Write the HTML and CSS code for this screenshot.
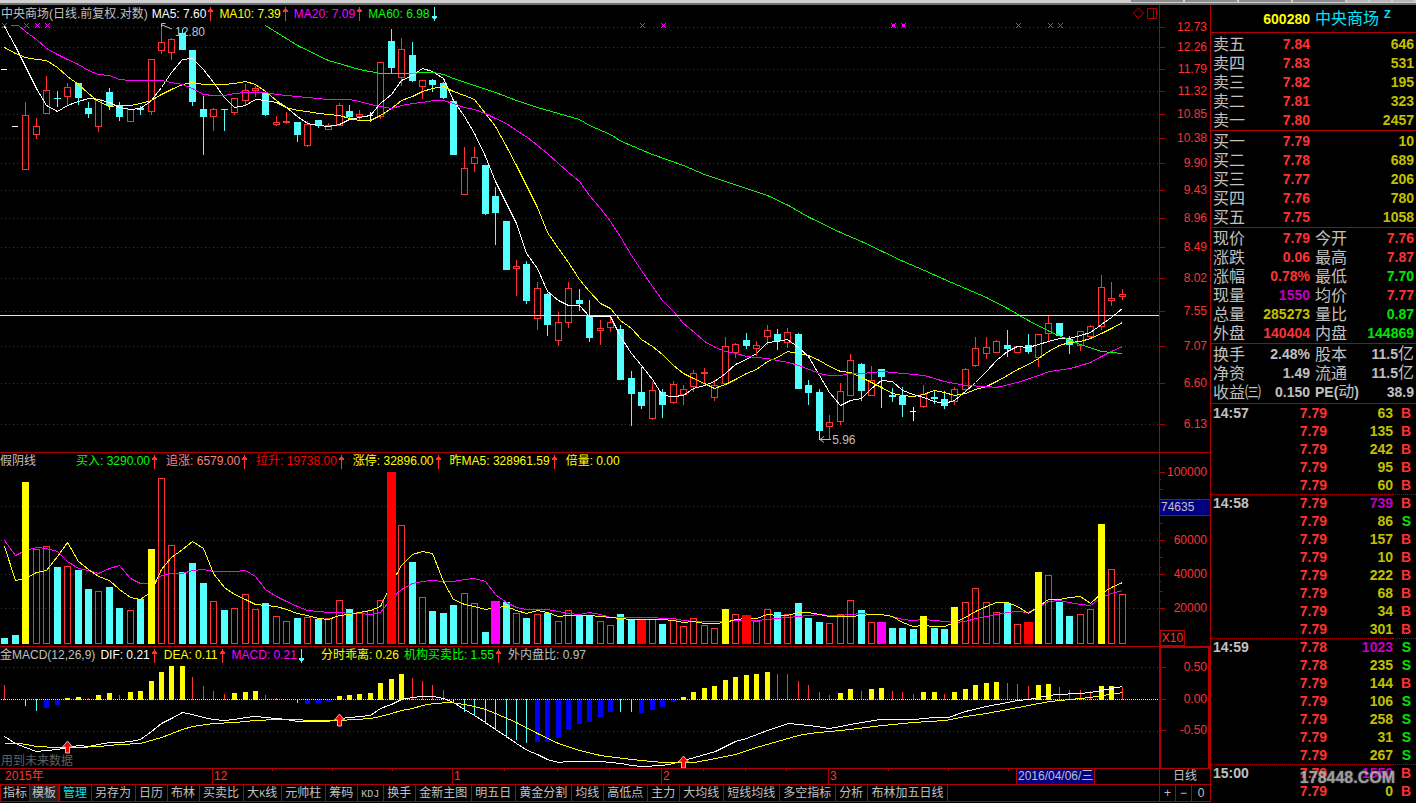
FILE: index.html
```html
<!DOCTYPE html>
<html lang="zh-CN">
<head>
<meta charset="utf-8">
<title>中央商场 600280</title>
<link rel="stylesheet" href="styles.css">
</head>
<body>
<svg class="defs" aria-hidden="true">
  <symbol id="up" viewBox="0 0 8 14"><path d="M3 0h1v2h1v1h1v2H4v9H3V5H1V3h1V2h1z" fill="#ff3232"/></symbol>
  <symbol id="down" viewBox="0 0 8 14"><path d="M3 14h1v-2h1v-1h1V9H4V0H3v9H1v2h1v1h1z" fill="#54ffff"/></symbol>
</svg>
<div class="app">
  <div class="strip"><i></i><i></i><i></i><i></i><i class="light"></i><i class="light"></i><i class="light"></i></div>
  <div class="body">
    <main class="charts">
      <section class="panel">
        <div class="pane">
          <header class="legend">
            <span class="grey">中央商场(日线.前复权.对数)</span>
            <span class="white">MA5: 7.60<svg class="arrow"><use href="#up"/></svg></span>
            <span class="yellow">MA10: 7.39<svg class="arrow"><use href="#up"/></svg></span>
            <span class="magenta">MA20: 7.09<svg class="arrow"><use href="#up"/></svg></span>
            <span class="green">MA60: 6.98<svg class="arrow"><use href="#down"/></svg></span>
            <svg class="tools" viewBox="0 0 26 14"><path d="M6.500 2l5 5-5 5.500L1.500 7z" fill="none" stroke="#c00000"/><path d="M15.500 2.500h9v10h-9zM21.500 2.500v10" fill="none" stroke="#b00000"/></svg>
          </header>
          <div class="plot">
            <svg id="price" viewBox="0 23 1159 429" preserveAspectRatio="none"></svg>
            <span class="note high">12.80</span>
            <span class="note low">5.96</span>
          </div>
        </div>
        <div class="axis" id="price-axis"></div>
      </section>

      <section class="panel">
        <div class="pane">
          <header class="legend wide">
            <span class="grey first">假阴线</span>
            <span class="green">买入: 3290.00<svg class="arrow"><use href="#up"/></svg></span>
            <span class="pink">追涨: 6579.00<svg class="arrow"><use href="#up"/></svg></span>
            <span class="red">拉升: 19738.00<svg class="arrow"><use href="#up"/></svg></span>
            <span class="yellow">涨停: 32896.00<svg class="arrow"><use href="#up"/></svg></span>
            <span class="yellow">昨MA5: 328961.59<svg class="arrow"><use href="#up"/></svg></span>
            <span class="yellow">倍量: 0.00</span>
          </header>
          <div class="plot"><svg id="volume" viewBox="0 470 1159 176" preserveAspectRatio="none"></svg></div>
        </div>
        <div class="axis" id="volume-axis"><span class="unit">X10</span></div>
      </section>

      <section class="panel">
        <div class="pane">
          <header class="legend macd">
            <span class="grey">金MACD(12,26,9)</span>
            <span class="white">DIF: 0.21<svg class="arrow"><use href="#up"/></svg></span>
            <span class="yellow">DEA: 0.11<svg class="arrow"><use href="#up"/></svg></span>
            <span class="magenta">MACD: 0.21<svg class="arrow"><use href="#down"/></svg></span>
            <span class="yellow apart">分时乖离: 0.26</span>
            <span class="green">机构买卖比: 1.55<svg class="arrow"><use href="#up"/></svg></span>
            <span class="grey">外内盘比: 0.97</span>
          </header>
          <div class="plot">
            <svg id="macd" viewBox="0 664 1159 104" preserveAspectRatio="none"></svg>
            <span class="warn">用到未来数据</span>
          </div>
        </div>
        <div class="axis boxed" id="macd-axis"></div>
      </section>

      <div class="dates">
        <div class="timeline" id="timeline"></div>
        <div class="period">日线</div>
      </div>

      <nav class="tabs">
        <button class="tight">指标</button><button class="tight on">模板</button><button class="manage">管理</button><button>另存为</button><button>日历</button><button>布林</button><button>买卖比</button><button>大<span class="mono">K</span>线</button><button>元帅柱</button><button>筹码</button><button><span class="mono">KDJ</span></button><button>换手</button><button>金新主图</button><button>明五日</button><button>黄金分割</button><button>均线</button><button>高低点</button><button>主力</button><button>大均线</button><button>短线均线</button><button>多空指标</button><button>分析</button><button>布林加五日线</button>
        <div class="zoom"><button>+</button><button>−</button><button>0</button></div>
      </nav>
    </main>

    <aside class="quote">
      <h1 class="stock"><span class="code">600280</span><span class="name">中央商场<sup>Z</sup></span></h1>
      <table class="book sells" id="sells"></table>
      <table class="book" id="buys"></table>
      <table class="book" id="info"></table>
      <table class="book last" id="basics"></table>
      <table class="ticks" id="ticks"></table>
      <div class="mark">178448.COM</div>
    </aside>
  </div>
</div>
<script src="app.js"></script>
</body>
</html>
```

FILE: styles.css
```css
* { box-sizing: border-box; }
html, body { height: 100%; }
body {
  margin: 0;
  background: #000;
  color: #c0c0c0;
  font: 12px/16px "Liberation Sans", "Noto Sans CJK SC", sans-serif;
  overflow: hidden;
}
.defs { position: absolute; width: 0; height: 0; }

.app { display: flex; flex-direction: column; height: 100vh; padding-bottom: 1px; }
.strip {
  flex: none;
  display: flex;
  justify-content: flex-end;
  gap: 2px;
  height: 5px;
  padding-right: 2px;
  background: #d0d0d0;
  border-bottom: 2px solid #707070;
}
.strip i { width: 52px; height: 2px; background: #8c8c8c; }
.strip i.light { width: 21px; background: #b8b8b8; }
.body { flex: 1; display: grid; grid-template-columns: minmax(0, 1fr) 206px; grid-template-rows: minmax(0, 1fr); min-height: 0; }

.charts { display: grid; grid-template-rows: 448fr 194fr 122fr 16px 17px; min-height: 0; min-width: 0; }
.panel { display: grid; grid-template-columns: minmax(0, 1fr) 51px; border-bottom: 1px solid #b00000; min-height: 0; }
.pane { display: flex; flex-direction: column; min-height: 0; min-width: 0; }
.legend { display: flex; gap: 4px; height: 17px; padding-left: 1px; line-height: 17px; white-space: nowrap; }
.panel:first-child .legend { height: 18px; line-height: 18px; }
.legend span { display: flex; align-items: center; }
.legend.wide { gap: 7px; padding-left: 0; }
.legend.macd { gap: 5px; padding-left: 0; }
.legend .first { width: 69px; }
.legend .apart { margin-left: 10px; }
.arrow { width: 8px; height: 14px; margin-left: 1px; }
.tools { width: 26px; height: 14px; margin: 1px 1px 0 auto; }
.plot { flex: 1; position: relative; min-height: 0; }
.plot > svg { position: absolute; width: 100%; height: 100%; }

.grey { color: #c0c0c0; }
.white { color: #fff; }
.yellow { color: #ff0; }
.magenta { color: #f0f; }
.green { color: #0f0; }
.pink { color: #ff8080; }
.red { color: #f00; }

.note, .warn { position: absolute; line-height: 14px; }
.high { left: 15.1%; top: 0.5%; }
.low { left: 71.8%; bottom: 1.2%; }
.warn { left: 1px; bottom: 0; color: #606060; }

.axis { position: relative; border-left: 1px solid #b00000; color: #ff3232; }
.axis.boxed { border: 2px solid #b00000; border-width: 1px 2px 0 2px; }
.label { position: absolute; left: 0; right: 3px; height: 14px; margin-top: -7px; line-height: 14px; text-align: right; }
.label::before { content: ""; position: absolute; left: 0; top: 7px; width: 5px; height: 1px; background: #b00000; }
.boxed .label { right: 1px; }
.minor { position: absolute; left: 0; height: 1px; width: 3px; background: #b00000; }
.minor.small { width: 1px; }
.cursor {
  position: absolute; left: 0; right: 0; height: 17px; margin-top: -8px; padding-left: 1px;
  line-height: 15px; color: #c0c0c0; background: #000080; border: solid #b00000; border-width: 1px 0;
}
.unit { position: absolute; left: 0; bottom: 0; width: 25px; height: 16px; border: 1px solid #b00000; line-height: 14px; text-align: center; }

.dates { display: grid; grid-template-columns: minmax(0, 1fr) 51px; border-bottom: 1px solid #b00000; line-height: 15px; }
.timeline { position: relative; color: #ff3232; }
.month { position: absolute; top: 0; height: 15px; padding-left: 1px; border-left: 1px solid #b00000; }
.month.year { border: 0; }
.tick { position: absolute; top: 0; width: 1px; height: 2px; background: #b00000; }
.day { position: absolute; top: 0; height: 15px; padding: 0 1px; color: #c0c0c0; background: #000080; border: solid #b00000; border-width: 0 1px; }
.period { border-left: 1px solid #b00000; text-align: center; }

.tabs { display: flex; border: solid #b00000; border-width: 0 0 1px 1px; white-space: nowrap; }
.tabs button {
  padding: 0 4px 0 3px; border: 0; border-right: 1px solid #b00000; border-radius: 0;
  background: #000; color: #c0c0c0; font: inherit; line-height: 16px;
}
.tabs .tight { padding: 0 2px; }
.tabs .on { background: #222; border-right-width: 2px; }
.tabs .manage { color: #00e5e5; }
.mono { font: 10px/14px "Liberation Mono", monospace; }
.zoom { display: grid; grid-template-columns: 16px 16px 1fr; width: 51px; margin-left: auto; border-left: 1px solid #b00000; }
.tabs .zoom button { padding: 0; }
.tabs .zoom button:last-child { border: 0; }

.quote { position: relative; border-left: 1px solid #b00000; font-weight: bold; font-size: 14px; min-width: 0; }
.stock { display: grid; grid-template-columns: 99px 1fr; gap: 5px; height: 28px; margin: 0; border-bottom: 1px solid #b00000; font-size: 14px; line-height: 28px; }
.code { color: #ff0; text-align: right; }
.name { color: #00e5ff; font-size: 16px; font-weight: normal; }
.name sup { margin-left: 5px; font-size: 11px; font-weight: bold; line-height: 1px; }

table { border-spacing: 0; table-layout: fixed; width: 100%; }
td, th { padding: 0; text-align: right; white-space: nowrap; vertical-align: middle; }
.book { border-bottom: 1px solid #b00000; padding-top: 1px; }
.book.sells { padding-top: 2px; }
.book.last { padding-bottom: 1px; }
.book td, .book th { height: 19px; line-height: 19px; }
.book th { width: 47px; padding-left: 2px; text-align: left; font-size: 16px; font-weight: normal; }
.book th:nth-child(3) { width: 49px; padding-left: 5px; }
.book th.latin { font-size: 14px; font-weight: bold; }
.book td:nth-child(2) { width: 52px; }
.book td:last-child { padding-right: 2px; }
.up { color: #ff3232; }
.dn { color: #00e600; }
.vol { color: #c0c000; }
.big { color: #c000c0; }
.cn { font-weight: normal; font-size: 16px; line-height: 1px; }

.ticks td, .ticks th { height: 18px; line-height: 17px; border-top: 1px solid transparent; }
.ticks th { width: 50px; padding-left: 2px; text-align: left; }
.ticks td:nth-child(2) { width: 66px; }
.ticks td:nth-child(3) { width: 66px; }
.ticks td:nth-child(4) { padding-right: 5px; }
.ticks .minute th, .ticks .minute td { border-top: 1px dotted #b00000; }
.mark {
  position: absolute; right: 21px; bottom: 13px; color: #b8b8b8; opacity: 0.85;
  font: bold 16px/22px "Liberation Sans", sans-serif;
  text-shadow: 0 0 2px #808080;
}
```

FILE: app.js
```js
const RED = '#ff3232', CYAN = '#54ffff', YELLOW = '#ffff00', MAGENTA = '#ff00ff', GREEN = '#00ff00', WHITE = '#ffffff', FRAME = '#b00000';
const xAt = i => Math.floor(4.93 + 10.44 * i);
const byId = id => document.getElementById(id);
const rect = (x, y, w, h, fill) => `<rect x="${x}" y="${y}" width="${w}" height="${h}" fill="${fill}"/>`;
const box = (x, y, w, h) => `<rect x="${x + 0.5}" y="${y + 0.5}" width="${w - 1}" height="${Math.max(h - 1, 1)}" fill="none" stroke="${RED}"/>`;
const line = (pts, color) => `<polyline points="${pts.map(p => (p[0] + 0.5) + ',' + (p[1] + 0.5)).join(' ')}" fill="none" stroke="${color}"/>`;
const series = ys => ys.trim().split(/\s+/).map((y, i) => [xAt(i), +y]);
const pairs = s => s.trim().split(/\s+/).map(p => p.split(',').map(Number));
const grid = ys => ys.map(y => `<path d="M1 ${y + 0.5}H1159" stroke="${FRAME}" stroke-dasharray="1 3"/>`).join('');
const crisp = s => `<g shape-rendering="crispEdges">${s}</g>`;

/* Candles: kind, high, body top, body bottom, low */
const candles = `w 69 69 69 69|w 126 126 126 126|r 102 115 169 169|r 118 126 134 138|r 76 90 113 113|c 91 98 98 106|r 83 87 96 104|c 83 83 97 104|c 102 108 113 117|r 99 99 126 131|c 88 92 105 109|c 102 105 116 120|r 109 109 121 121|c 106 108 109 114|r 59 59 111 114|r 26 42 50 53|r 38 39 52 59|c 29 33 49 49|c 50 50 101 105|c 96 109 116 154|r 108 109 116 130|c 109 109 109 130|r 98 98 112 114|r 84 90 100 104|r 86 88 90 96|c 92 93 114 115|r 116 122 124 125|r 112 121 122 123|c 122 122 134 141|r 121 124 145 146|c 120 120 125 127|r 123 125 129 129|r 103 105 125 125|c 105 111 116 118|r 110 114 116 119|w 112 115 115 121|r 62 62 116 118|c 29 41 67 72|r 38 49 77 85|c 42 55 80 81|r 80 80 86 98|c 79 80 84 91|c 82 83 97 98|c 101 101 154 154|r 147 168 194 194|r 147 157 163 171|c 165 165 213 214|c 187 196 212 244|c 221 221 269 269|r 260 266 268 295|c 261 264 300 303|r 282 288 318 329|c 293 294 324 335|r 312 322 340 345|r 282 288 322 327|c 289 300 303 310|c 300 315 337 341|r 320 328 330 344|r 317 322 327 331|c 325 329 379 379|c 371 378 393 425|c 367 392 405 408|r 382 390 418 419|c 389 392 404 417|r 381 384 402 403|r 385 389 394 404|r 370 373 386 391|r 368 372 373 382|r 380 385 397 400|r 337 346 383 383|r 343 344 352 357|c 333 340 345 348|r 341 345 348 355|r 325 330 336 344|c 329 334 340 349|r 328 332 342 347|c 333 334 388 388|c 380 385 392 404|c 389 392 430 439|r 415 422 426 438|r 383 391 421 424|r 354 360 395 395|c 363 364 390 400|r 366 380 395 395|c 369 369 376 407|c 388 395 396 401|c 387 396 404 416|w 407 411 411 420|r 385 394 406 407|c 390 397 398 403|c 391 399 405 408|r 387 389 401 404|r 368 369 389 391|r 337 348 365 366|r 337 347 353 358|r 340 341 352 352|c 330 345 348 356|r 346 346 352 352|c 334 345 351 353|r 334 334 357 366|r 316 323 333 341|c 323 323 335 335|c 336 339 344 353|r 331 331 345 350|r 325 326 336 337|r 275 287 326 329|r 282 298 300 305|r 289 294 296 299`.split('|');

const ma5 = series(`26 46 66 88 105 111 105 101 98 99 102 107 109 108 100 87 72 59 58 69 82 97 107 105 99 100 102 107 116 123 125 126 124 119 117 115 103 94 80 75 68 71 78 100 116 133 156 181 203 223 253 268 291 300 305 305 316 316 316 336 353 365 379 395 396 395 388 385 381 373 364 359 353 342 341 339 347 356 375 392 405 400 398 388 380 381 390 394 397 401 403 400 391 382 371 360 351 346 347 344 341 338 338 335 332 324 317 308`);
const ma10 = series(`47 53 57 59 60 67 76 84 93 101 106 105 105 103 100 94 89 84 82 84 84 84 83 81 84 91 100 107 110 111 113 114 115 118 120 120 115 108 100 96 91 88 86 91 95 99 113 126 146 165 185 207 232 248 262 279 291 303 308 320 328 339 346 354 365 373 378 383 388 384 379 373 369 361 357 351 353 355 360 366 371 372 377 382 387 393 395 396 394 390 392 395 393 389 386 381 375 369 364 358 351 345 342 341 338 333 328 322`);
const ma20 = pairs(`10,25 18,25 25,31 36,39 46,48 57,54 67,59 78,64 88,70 98,74 109,75 119,79 130,80 161,80 171,82 182,84 192,88 203,94 213,95 224,95 234,93 245,92 265,92 276,94 286,95 307,97 328,99 349,99 359,101 370,104 380,106 391,108 401,105 412,103 422,102 433,100 443,100 453,103 464,107 474,109 485,113 495,118 506,123 516,130 527,137 537,145 547,153 558,163 568,172 579,181 589,195 600,208 610,221 621,238 631,255 641,270 652,286 662,300 673,311 683,323 694,332 704,341 715,347 725,351 736,353 746,356 756,357 767,358 777,360 788,362 798,365 809,369 819,373 829,375 840,375 850,373 861,373 882,371 903,373 924,375 944,381 965,385 986,386 996,387 1017,382 1038,375 1049,371 1070,368 1090,362 1101,356 1111,351 1122,346`);
const ma60 = pairs(`265,25 297,45 328,60 359,69 380,73 412,73 422,72 433,72 443,74 453,78 474,85 495,92 516,100 537,107 558,113 579,119 589,125 610,134 621,141 652,154 683,165 704,174 725,181 746,188 767,195 788,205 809,217 840,232 861,241 882,251 903,261 924,270 944,279 965,288 986,297 1007,308 1028,320 1049,331 1070,340 1080,344 1101,351 1111,352 1122,353`);

const drawCandle = (text, i) => {
  const [kind, ...v] = text.split(' ');
  const [high, top, bottom, low] = v.map(Number);
  const x = xAt(i);
  if (kind === 'r') {
    return box(x - 3, top, 7, bottom - top + 1)
      + (top > high ? rect(x, high, 1, top - high, RED) : '')
      + (low > bottom ? rect(x, bottom + 1, 1, low - bottom, RED) : '');
  }
  const color = kind === 'c' ? CYAN : WHITE;
  return rect(x, high, 1, low - high + 1, color) + rect(x - 3, top, kind === 'w' ? 6 : 7, bottom - top + 1, color);
};
const cross = (x, bold) => `<path d="M${x - 2} 23l5 5M${x + 3} 23l-5 5" stroke="${MAGENTA}"/>` + (bold ? rect(x - 1, 24, 3, 3, MAGENTA) : '');

const priceLevels = [[27, '12.73'], [47, '12.26'], [69, '11.79'], [91, '11.32'], [114, '10.85'], [138, '10.38'], [163, '9.90'], [190, '9.43'], [218, '8.96'], [247, '8.49'], [278, '8.02'], [311, '7.55'], [346, '7.07'], [383, '6.60'], [424, '6.13']];
byId('price').innerHTML = crisp(
  grid(priceLevels.map(l => l[0]))
  + candles.map(drawCandle).join('')
  + line(ma5, WHITE) + line(ma10, YELLOW) + line(ma20, MAGENTA) + line(ma60, GREEN)
  + rect(0, 315, 1159, 1, YELLOW)
) + [4, 26, 37, 47, 642, 663, 1018, 1050, 1060].map(x => cross(x)).join('') + cross(893, true) + cross(903, true)
  + '<path d="M161.500 27v-3.500h4M162 25l10 4M831 439.500h-11M824 436.500l-4 3 4 3" fill="none" stroke="#c0c0c0"/>';

/* Volume bars: kind and top; R, y and m are solid highlights */
const volumes = `c638 c635 y482 r549 r546 c567 r566 c570 c589 r591 c587 c608 r610 c599 y549 r478 r545 c572 c563 c583 r601 c610 r608 r594 r609 c603 r616 r621 c618 r617 c619 r618 r600 c609 r612 r610 r600 R472 r525 c562 r597 c611 c613 c605 r593 r603 c632 m601 c602 r613 c618 r614 c613 r621 r610 c615 c615 r621 r625 c614 c619 R620 r619 c624 r620 r626 r618 r625 r628 y609 r614 R615 r621 r609 c612 r614 c603 c618 c622 r623 r614 r600 c610 r622 m622 c628 c628 c629 y616 c628 c629 y607 r602 r588 r602 r612 c603 r624 R622 y572 r575 c602 c616 r614 r609 y524 r569 r594`.split(' ');
const volShort = series(`546 580 578 572 570 556 542 561 569 576 580 589 597 599 591 569 557 549 541 548 573 587 594 599 604 605 606 609 613 615 618 619 615 614 612 610 606 583 565 554 551 553 581 599 604 606 609 607 606 610 613 610 612 616 615 615 615 616 617 618 619 619 619 619 620 622 621 623 623 622 619 618 618 614 615 615 612 612 614 616 616 616 615 614 614 616 622 626 625 626 626 622 617 611 606 602 602 606 613 606 599 599 597 596 603 593 587 582`);
const volLong = series(`540 555 550 547 548 551 561 568 570 573 568 565 578 583 583 575 573 573 570 569 571 571 571 570 576 589 596 601 606 610 611 612 612 613 613 614 612 598 589 583 581 580 581 581 579 578 581 594 602 607 609 609 609 611 613 614 612 614 617 617 617 617 617 618 618 620 621 621 621 621 620 620 620 619 618 617 616 615 614 615 615 614 613 614 614 616 619 620 619 620 621 622 621 618 616 614 612 611 612 607 601 600 602 604 605 597 593 590`);
const drawVolume = highlights => (text, i) => {
  const kind = text[0], top = +text.slice(1), x = xAt(i), h = 644 - top;
  if ('Rym'.includes(kind) !== highlights) return '';
  if (kind === 'r') return box(x - 3, top, 7, h);
  if (kind === 'c') return rect(x - 3, top, 7, h, CYAN);
  if (kind === 'y') return rect(x - 3, top, 7, h, YELLOW);
  return rect(x - 4, top, 9, h, kind === 'R' ? '#ff0000' : MAGENTA);
};
byId('volume').innerHTML = crisp(grid([506, 540, 574, 608])
  + volumes.map(drawVolume(false)).join('') + line(volLong, MAGENTA) + line(volShort, YELLOW)
  + volumes.map(drawVolume(true)).join(''));

/* MACD histogram: kind and far end from the zero line; "-" for none */
const histogram = `r685 - c705 c710 b707 b704 y698 y697 r698 y695 y693 r695 y692 y691 y681 y672 y666 y666 r677 r686 r691 r694 y693 y692 y691 r695 r698 - c702 b703 b702 b701 y696 y695 y694 y693 y683 y679 y674 r678 r681 r685 r690 c701 c711 c715 c723 c728 c737 c739 c742 b741 b741 b737 b729 b723 b721 b716 b711 c711 c711 b712 b709 b706 b701 y697 y692 y688 y686 y680 y677 y675 y674 y672 r674 r674 r681 r685 r692 r695 y693 y689 r691 y689 y688 r691 r692 r694 y692 y692 r694 y692 y689 y685 y683 y682 r683 r684 r686 y685 y684 r687 r690 r690 r691 y686 y686 r687`.split(' ');
const dif = pairs(`4,736 15,743 25,747 36,751 46,750 57,749 67,747 78,745 88,746 98,744 109,742 119,742 130,741 140,739 151,731 161,723 171,718 182,712 192,714 203,717 213,719 224,720 234,719 245,717 255,716 276,718 286,719 297,721 328,721 339,718 370,715 380,708 391,704 401,699 412,697 422,696 433,696 443,698 453,702 464,709 474,715 485,722 495,729 506,736 516,743 527,750 537,754 547,759 558,762 568,761 600,761 610,762 621,763 631,765 641,766 662,765 673,763 683,760 694,757 715,751 735,741 746,738 767,730 788,723 798,724 809,725 829,728 840,726 850,724 861,722 880,719 913,719 934,717 948,717 965,711 986,706 1007,702 1017,700 1028,699 1038,697 1055,694 1080,693 1090,692 1101,690 1111,688 1122,686`);
const dea = pairs(`4,743 20,743 36,746 57,747 78,747 98,746 119,744 140,743 161,737 182,729 192,726 213,723 234,722 255,720 276,719 297,719 307,720 339,720 370,718 380,716 391,713 401,710 412,708 422,705 433,703 450,702 464,704 474,706 485,709 495,713 516,722 537,733 558,743 579,750 600,755 631,759 652,761 662,762 694,762 715,758 735,754 756,747 777,741 798,735 809,733 829,731 850,729 882,725 913,722 945,720 965,716 986,713 1007,709 1028,705 1049,701 1070,699 1090,697 1101,695 1111,694 1122,692`);
const drawHistogram = (text, i) => {
  const kind = text[0], end = +text.slice(1), x = xAt(i);
  if (kind === '-') return '';
  const top = Math.min(end, 699), h = Math.abs(699 - end) + 1;
  if (kind === 'r') return rect(x, top, 1, h, RED);
  if (kind === 'c') return rect(x, top, 1, h, CYAN);
  return rect(x - 2, top, 5, h, kind === 'y' ? YELLOW : '#0000ff');
};
const signal = (x, y) => `<path d="M${x + 0.5} ${y - 6}l5 6h-3v6h-4v-6h-3z" fill="#ff0000" stroke="#c0c0c0"/>`;
byId('macd').innerHTML = crisp(grid([667, 731])
  + histogram.map(drawHistogram).join('')
  + '<path d="M1 699.500H1159" stroke="#e0e0e0" stroke-dasharray="1 1"/>'
  + line(dif, WHITE) + line(dea, YELLOW)) + signal(67, 747) + signal(339, 720) + signal(683, 762);

/* Axes: each panel spans [top, top + height) in chart units */
const place = (y, top, height) => `top:${((y - top) / height * 100).toFixed(2)}%`;
const labels = (id, list, top, height) => byId(id).insertAdjacentHTML('beforeend',
  list.map(([y, text]) => `<div class="label" style="${place(y, top, height)}">${text}</div>`).join(''));
labels('price-axis', priceLevels, 5, 447);
labels('volume-axis', [[472, '100000'], [540, '60000'], [574, '40000'], [608, '20000']], 453, 193);
labels('macd-axis', [[666, '0.50'], [698, '0.00'], [730, '-0.50']], 647, 121);
byId('volume-axis').insertAdjacentHTML('beforeend',
  [489, 523, 557, 591].map(y => `<i class="minor" style="${place(y, 453, 193)}"></i>`).join('')
  + [479, 533, 547, 567, 581, 601].map(y => `<i class="minor small" style="${place(y, 453, 193)}"></i>`).join('')
  + `<div class="cursor" style="${place(507, 453, 193)}">74635</div>`);

const left = x => `left:${(x / 1159 * 100).toFixed(2)}%`;
byId('timeline').innerHTML = `<span class="month year" style="${left(4)}">2015年</span>`
  + [[212, '12'], [452, '1'], [661, '2'], [828, '3']].map(([x, t]) => `<span class="month" style="${left(x)}">${t}</span>`).join('')
  + [272, 332, 392, 504, 557, 609, 703, 745, 786, 888, 948, 1008].map(x => `<i class="tick" style="${left(x)}"></i>`).join('')
  + `<span class="day" style="${left(1016)}">2016/04/06/三</span>`;

/* Quote tables */
const bookRow = ([a, av, ac, b, bv, bc]) => `<tr><th>${a}</th><td class="${ac}">${av}</td><th class="${b[0] === 'P' ? 'latin' : ''}">${b}</th><td class="${bc}">${bv}</td></tr>`;
const level = (name, price, n) => bookRow([name, price, 'up', '', n, 'vol']);
byId('sells').innerHTML = level('卖五', '7.84', 646) + level('卖四', '7.83', 531) + level('卖三', '7.82', 195) + level('卖二', '7.81', 323) + level('卖一', '7.80', 2457);
byId('buys').innerHTML = level('买一', '7.79', 10) + level('买二', '7.78', 689) + level('买三', '7.77', 206) + level('买四', '7.76', 780) + level('买五', '7.75', 1058);
byId('info').innerHTML = [
  ['现价', '7.79', 'up', '今开', '7.76', 'up'],
  ['涨跌', '0.06', 'up', '最高', '7.87', 'up'],
  ['涨幅', '0.78%', 'up', '最低', '7.70', 'dn'],
  ['现量', '1550', 'big', '均价', '7.77', 'up'],
  ['总量', '285273', 'vol', '量比', '0.87', 'dn'],
  ['外盘', '140404', 'up', '内盘', '144869', 'dn']
].map(bookRow).join('');
byId('basics').innerHTML = [
  ['换手', '2.48%', '', '股本', '11.5<span class="cn">亿</span>', ''],
  ['净资', '1.49', '', '流通', '11.5<span class="cn">亿</span>', ''],
  ['收益㈢', '0.150', '', 'PE(<span class="cn">动</span>)', '38.9', '']
].map(bookRow).join('');

const ticks = `14:57 9 63 B|- 9 135 B|- 9 242 B|- 9 95 B|- 9 60 B|14:58 9 739 B|- 9 86 S|- 9 157 B|- 9 10 B|- 9 222 B|- 9 68 B|- 9 34 B|- 9 301 B|14:59 8 1023 S|- 8 235 S|- 9 144 B|- 9 106 S|- 9 258 S|- 9 31 S|- 9 267 S|15:00 9 1550 B|- 9 0 B`;
byId('ticks').innerHTML = ticks.split('|').map((row, i) => {
  const [time, cent, n, side] = row.split(' ');
  return `<tr class="${i && time !== '-' ? 'minute' : ''}"><th>${time === '-' ? '' : time}</th><td class="up">7.7${cent}</td><td class="${+n > 500 ? 'big' : 'vol'}">${n}</td><td class="${side === 'B' ? 'up' : 'dn'}">${side}</td></tr>`;
}).join('');
```
